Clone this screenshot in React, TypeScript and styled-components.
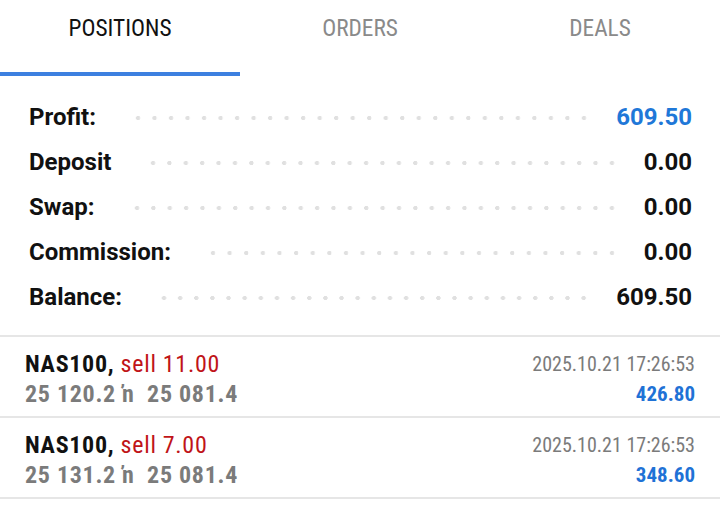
import React from 'react';
import styled, { createGlobalStyle } from 'styled-components';

const GlobalStyle = createGlobalStyle`
  html, body {
    margin: 0;
    padding: 0;
    background: #ffffff;
  }
  body {
    font-family: Roboto, 'Liberation Sans', sans-serif;
    -webkit-font-smoothing: antialiased;
  }
`;

interface SummaryItem {
  label: string;
  value: string;
  accent?: boolean;
}

interface Position {
  symbol: string;
  side: string;
  openPrice: string;
  currentPrice: string;
  time: string;
  profit: string;
}

const tabs = ['POSITIONS', 'ORDERS', 'DEALS'];

const summary: SummaryItem[] = [
  { label: 'Profit:', value: '609.50', accent: true },
  { label: 'Deposit', value: '0.00' },
  { label: 'Swap:', value: '0.00' },
  { label: 'Commission:', value: '0.00' },
  { label: 'Balance:', value: '609.50' },
];

const positions: Position[] = [
  { symbol: 'NAS100,', side: 'sell 11.00', openPrice: '25 120.2', currentPrice: '25 081.4', time: '2025.10.21 17:26:53', profit: '426.80' },
  { symbol: 'NAS100,', side: 'sell 7.00', openPrice: '25 131.2', currentPrice: '25 081.4', time: '2025.10.21 17:26:53', profit: '348.60' },
];

const App: React.FC = () => {
  return (
    <Page>
      <GlobalStyle />
      <TabBar>
        {tabs.map((t, i) => (
          <Tab key={t}>
            <TabLabel $active={i === 0}>{t}</TabLabel>
            <TabIndicator $active={i === 0} />
          </Tab>
        ))}
      </TabBar>

      <Summary>
        {summary.map((s) => (
          <SummaryRow key={s.label}>
            <SummaryLabel>{s.label}</SummaryLabel>
            <Leader />
            <SummaryValue $accent={s.accent}>{s.value}</SummaryValue>
          </SummaryRow>
        ))}
      </Summary>

      <List>
        {positions.map((p, i) => (
          <PositionRow key={i}>
            <PositionLeft>
              <Line>
                <Symbol>{p.symbol}</Symbol> <Side>{p.side}</Side>
              </Line>
              <Prices>
                {p.openPrice} ŉ&nbsp;&nbsp;{p.currentPrice}
              </Prices>
            </PositionLeft>
            <PositionRight>
              <Time>{p.time}</Time>
              <Profit>{p.profit}</Profit>
            </PositionRight>
          </PositionRow>
        ))}
      </List>
    </Page>
  );
};

export default App;

const Page = styled.div`
  width: 720px;
  min-height: 506px;
  background: #fff;
`;

const TabBar = styled.div`
  display: grid;
  grid-template-columns: repeat(3, 1fr);
  height: 76px;
`;

const Tab = styled.div`
  display: flex;
  flex-direction: column;
  justify-content: space-between;
  align-items: stretch;
`;

const TabLabel = styled.div<{ $active?: boolean }>`
  height: 57px;
  line-height: 57px;
  text-align: center;
  font-size: 23.3px;
  font-stretch: condensed;
  color: ${(p) => (p.$active ? '#111' : '#8a8a8a')};
`;

const TabIndicator = styled.div<{ $active?: boolean }>`
  height: 4px;
  background: ${(p) => (p.$active ? '#3d80e0' : 'transparent')};
`;

const Summary = styled.div`
  padding: 18px 28px 16px 29px;
`;

const SummaryRow = styled.div`
  display: flex;
  align-items: center;
  height: 45px;
`;

const SummaryLabel = styled.span`
  font-size: 24px;
  font-weight: 700;
  color: #111;
`;

const Leader = styled.span`
  flex: 1;
  height: 6px;
  margin: 2px 24px 0 34px;
  background-image: radial-gradient(circle, #e0e0e0 1.9px, transparent 2.4px);
  background-size: 16px 6px;
  background-repeat: space no-repeat;
`;

const SummaryValue = styled.span<{ $accent?: boolean }>`
  font-size: 24px;
  font-weight: 700;
  color: ${(p) => (p.$accent ? '#1f78d8' : '#111')};
`;

const List = styled.div`
  border-top: 2px solid #e6e6e6;
`;

const PositionRow = styled.div`
  display: flex;
  justify-content: space-between;
  padding: 12px 25px 7px 25px;
  border-bottom: 2px solid #e6e6e6;
  font-stretch: condensed;
`;

const PositionLeft = styled.div`
  display: flex;
  flex-direction: column;
  letter-spacing: 0.7px;
`;

const PositionRight = styled.div`
  display: flex;
  flex-direction: column;
  align-items: flex-end;
`;

const Line = styled.div`
  height: 30px;
  line-height: 30px;
  font-size: 24px;
  white-space: nowrap;
`;

const Symbol = styled.span`
  font-weight: 700;
  color: #111;
`;

const Side = styled.span`
  color: #c01418;
`;

const Prices = styled.div`
  height: 30px;
  line-height: 30px;
  font-size: 24px;
  font-weight: 700;
  color: #7b7b7b;
  white-space: nowrap;
`;

const Time = styled.div`
  height: 30px;
  line-height: 30px;
  font-size: 20px;
  color: #7b7b7b;
`;

const Profit = styled.div`
  height: 30px;
  line-height: 30px;
  font-size: 21px;
  font-weight: 700;
  color: #1f72d6;
`;
